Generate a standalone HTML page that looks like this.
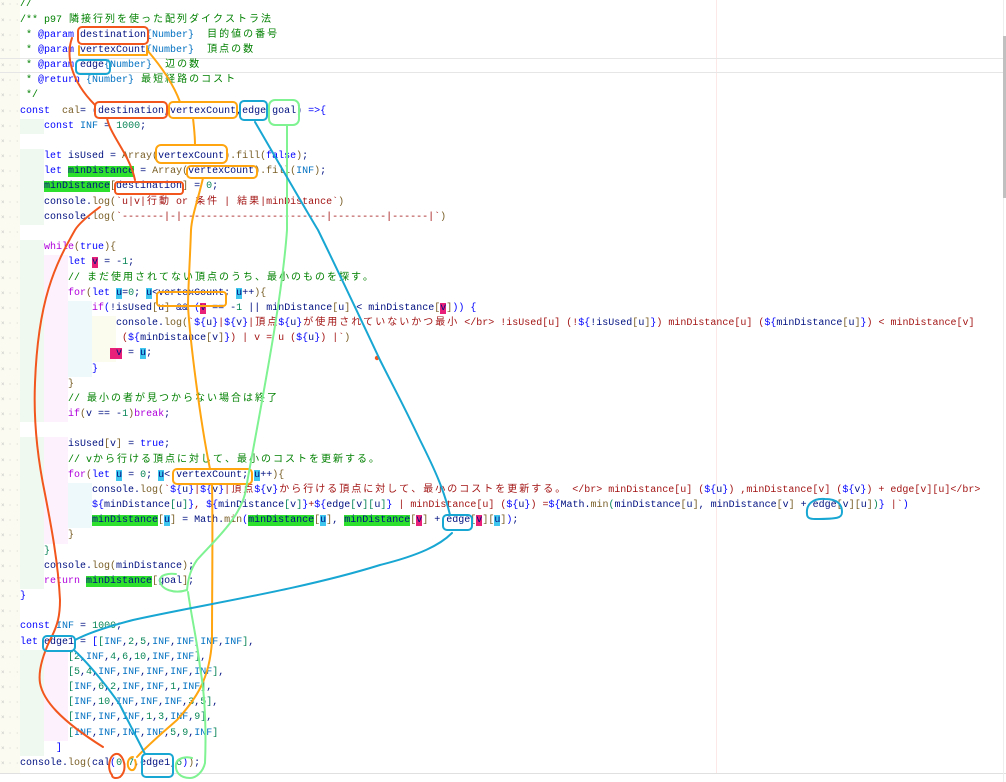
<!DOCTYPE html>
<html><head><meta charset="utf-8">
<style>
html,body{margin:0;padding:0;background:#fff;width:1006px;height:782px;overflow:hidden;position:relative}
#code{position:absolute;left:0;top:-2.6px;width:1003px;font-family:"Liberation Mono","Noto Sans CJK JP",monospace;font-size:10px;color:#001080}
.l{height:15.18px;line-height:15.18px;white-space:pre;padding-left:20px;position:relative;background-repeat:no-repeat;background-position:20px 0;overflow:hidden}
.l::before{content:"× · ·";position:absolute;left:1px;top:0;font-size:6px;color:#c4c4c4;letter-spacing:0}
.w{display:inline-block;width:12px;text-align:center}
.k{color:#0000ff}.p{color:#af00db}.c{color:#008000}.s{color:#a31515}.n{color:#098658}.f{color:#795e26}.i{color:#0070c1}.b{color:#0000ff}
.g{background:#2ee02e}.pk{background:#e8207a}.cy{background:#3fc6ee}
#ann{position:absolute;left:0;top:0}
</style></head><body>
<div style="position:absolute;left:0;top:0;width:20px;height:773px;background:#fbfbf1"></div>
<div style="position:absolute;left:716px;top:0;width:1px;height:773px;background:#fde8e8"></div>
<div style="position:absolute;left:0;top:58px;width:1003px;height:1px;background:#e6e6e6"></div>
<div style="position:absolute;left:0;top:72px;width:1003px;height:1px;background:#e6e6e6"></div>
<div style="position:absolute;left:0;top:773px;width:1006px;height:1px;background:#e0e0e0"></div>
<div style="position:absolute;left:1003px;top:0;width:1px;height:782px;background:#eee"></div>
<div style="position:absolute;left:1003px;top:36px;width:3px;height:162px;background:#c0c0c0"></div>
<div id="code">
<div class="l"><span class="c">//</span></div>
<div class="l"><span class="c">/** p97 隣接行列を使った配列ダイクストラ法</span></div>
<div class="l"><span class="c"> * </span><span class="b">@param</span> destination<span class="i">{Number}</span><span class="c">  目的値の番号</span></div>
<div class="l"><span class="c"> * </span><span class="b">@param</span> vertexCount<span class="i">{Number}</span><span class="c">  頂点の数</span></div>
<div class="l"><span class="c"> * </span><span class="b">@param</span> edge<span class="i">{Number}</span><span class="c">  辺の数</span></div>
<div class="l"><span class="c"> * </span><span class="b">@return</span> <span class="i">{Number}</span><span class="c"> 最短経路のコスト</span></div>
<div class="l"><span class="c"> */</span></div>
<div class="l"><span class="k">const</span>  <span class="f">cal</span>= (destination,vertexCount,edge,goal) <span class="k">=&gt;{</span></div>
<div class="l">    <span class="k">const</span> <span class="i">INF</span> = <span class="n">1000</span>;</div>
<div class="l"></div>
<div class="l">    <span class="k">let</span> isUsed = <span class="f">Array(</span>vertexCount<span class="f">).fill(</span><span class="k">false</span><span class="f">)</span>;</div>
<div class="l">    <span class="k">let</span> <span class="g">minDistance</span> = <span class="f">Array(</span>vertexCount<span class="f">).fill(</span><span class="i">INF</span><span class="f">)</span>;</div>
<div class="l">    <span class="g">minDistance</span><span class="f">[</span>destination<span class="f">]</span> = <span class="n">0</span>;</div>
<div class="l">    console.<span class="f">log(</span><span class="s">`u|v|行動 or 条件 | 結果|minDistance`</span><span class="f">)</span></div>
<div class="l">    console.<span class="f">log(</span><span class="s">`-------|-|------------------------|---------|------|`</span><span class="f">)</span></div>
<div class="l"></div>
<div class="l">    <span class="p">while</span><span class="f">(</span><span class="k">true</span><span class="f">){</span></div>
<div class="l">        <span class="k">let</span> <span class="pk">v</span> = -<span class="n">1</span>;</div>
<div class="l">        <span class="c">// まだ使用されてない頂点のうち、最小のものを探す。</span></div>
<div class="l">        <span class="p">for</span><span class="f">(</span><span class="k">let</span> <span class="cy">u</span>=<span class="n">0</span>; <span class="cy">u</span>&lt;vertexCount; <span class="cy">u</span>++<span class="f">){</span></div>
<div class="l">            <span class="p">if</span><span class="b">(</span>!isUsed<span class="f">[</span>u<span class="f">]</span> &amp;&amp; <span class="b">(</span><span class="pk">v</span> == -<span class="n">1</span> || minDistance<span class="f">[</span>u<span class="f">]</span> &lt; minDistance<span class="f">[</span><span class="pk">v</span><span class="f">]</span><span class="b">))</span> <span class="b">{</span></div>
<div class="l">                console.<span class="f">log(</span><span class="s">`</span><span class="b">${</span>u<span class="b">}</span><span class="s">|</span><span class="b">${</span>v<span class="b">}</span><span class="s">|頂点</span><span class="b">${</span>u<span class="b">}</span><span class="s">が使用されていないかつ最小 &lt;/br&gt; !isUsed[u] (!</span><span class="b">${</span>!isUsed<span class="f">[</span>u<span class="f">]</span><span class="b">}</span><span class="s">) minDistance[u] (</span><span class="b">${</span>minDistance<span class="f">[</span>u<span class="f">]</span><span class="b">}</span><span class="s">) &lt; minDistance[v]</span></div>
<div class="l">                 <span class="s">(</span><span class="b">${</span>minDistance<span class="f">[</span>v<span class="f">]</span><span class="b">}</span><span class="s">) | v = u (</span><span class="b">${</span>u<span class="b">}</span><span class="s">) |`</span><span class="f">)</span></div>
<div class="l">               <span class="pk"> v</span> = <span class="cy">u</span>;</div>
<div class="l">            <span class="b">}</span></div>
<div class="l">        <span class="f">}</span></div>
<div class="l">        <span class="c">// 最小の者が見つからない場合は終了</span></div>
<div class="l">        <span class="p">if</span><span class="f">(</span>v == -<span class="n">1</span><span class="f">)</span><span class="p">break</span>;</div>
<div class="l"></div>
<div class="l">        isUsed<span class="f">[</span>v<span class="f">]</span> = <span class="k">true</span>;</div>
<div class="l">        <span class="c">// vから行ける頂点に対して、最小のコストを更新する。</span></div>
<div class="l">        <span class="p">for</span><span class="f">(</span><span class="k">let</span> <span class="cy">u</span> = <span class="n">0</span>; <span class="cy">u</span>&lt; vertexCount; <span class="cy">u</span>++<span class="f">){</span></div>
<div class="l">            console.<span class="f">log(</span><span class="s">`</span><span class="b">${</span>u<span class="b">}</span><span class="s">|</span><span class="b">${</span>v<span class="b">}</span><span class="s">|頂点</span><span class="b">${</span>v<span class="b">}</span><span class="s">から行ける頂点に対して、最小のコストを更新する。 &lt;/br&gt; minDistance[u] (</span><span class="b">${</span>u<span class="b">}</span><span class="s">) ,minDistance[v] (</span><span class="b">${</span>v<span class="b">}</span><span class="s">) + edge[v][u]&lt;/br&gt;</span></div>
<div class="l">            <span class="b">${</span>minDistance<span class="n">[</span>u<span class="n">]</span><span class="b">}</span><span class="s">, </span><span class="b">${</span>minDistance<span class="n">[</span>v<span class="n">]</span><span class="b">}</span><span class="s">+</span><span class="b">${</span>edge<span class="n">[</span>v<span class="n">][</span>u<span class="n">]</span><span class="b">}</span><span class="s"> | minDistance[u] (</span><span class="b">${</span>u<span class="b">}</span><span class="s">) =</span><span class="b">${</span>Math.<span class="f">min</span><span class="n">(</span>minDistance<span class="f">[</span>u<span class="f">]</span>, minDistance<span class="f">[</span>v<span class="f">]</span> + edge<span class="f">[</span>v<span class="f">][</span>u<span class="f">]</span><span class="n">)</span><span class="b">}</span><span class="s"> |`</span><span class="b">)</span></div>
<div class="l">            <span class="g">minDistance</span><span class="f">[</span><span class="cy">u</span><span class="f">]</span> = Math.<span class="f">min</span><span class="b">(</span><span class="g">minDistance</span><span class="f">[</span><span class="cy">u</span><span class="f">]</span>, <span class="g">minDistance</span><span class="f">[</span><span class="pk">v</span><span class="f">]</span> + edge<span class="f">[</span><span class="pk">v</span><span class="f">][</span><span class="cy">u</span><span class="f">]</span><span class="b">)</span>;</div>
<div class="l">        <span class="f">}</span></div>
<div class="l">    <span class="n">}</span></div>
<div class="l">    console.<span class="f">log(</span>minDistance<span class="f">)</span>;</div>
<div class="l">    <span class="p">return</span> <span class="g">minDistance</span><span class="f">[</span>goal<span class="f">]</span>;</div>
<div class="l"><span class="b">}</span></div>
<div class="l"></div>
<div class="l"><span class="k">const</span> <span class="i">INF</span> = <span class="n">1000</span>;</div>
<div class="l"><span class="k">let</span> edge1 = <span class="b">[</span><span class="n">[</span><span class="i">INF</span>,<span class="n">2</span>,<span class="n">5</span>,<span class="i">INF</span>,<span class="i">INF</span>,<span class="i">INF</span>,<span class="i">INF</span><span class="n">]</span>,</div>
<div class="l">        <span class="n">[2</span>,<span class="i">INF</span>,<span class="n">4</span>,<span class="n">6</span>,<span class="n">10</span>,<span class="i">INF</span>,<span class="i">INF</span><span class="n">]</span>,</div>
<div class="l">        <span class="n">[5</span>,<span class="n">4</span>,<span class="i">INF</span>,<span class="i">INF</span>,<span class="i">INF</span>,<span class="i">INF</span>,<span class="i">INF</span><span class="n">]</span>,</div>
<div class="l">        <span class="n">[</span><span class="i">INF</span>,<span class="n">6</span>,<span class="n">2</span>,<span class="i">INF</span>,<span class="i">INF</span>,<span class="n">1</span>,<span class="i">INF</span><span class="n">]</span>,</div>
<div class="l">        <span class="n">[</span><span class="i">INF</span>,<span class="n">10</span>,<span class="i">INF</span>,<span class="i">INF</span>,<span class="i">INF</span>,<span class="n">3</span>,<span class="n">5]</span>,</div>
<div class="l">        <span class="n">[</span><span class="i">INF</span>,<span class="i">INF</span>,<span class="i">INF</span>,<span class="n">1</span>,<span class="n">3</span>,<span class="i">INF</span>,<span class="n">9]</span>,</div>
<div class="l">        <span class="n">[</span><span class="i">INF</span>,<span class="i">INF</span>,<span class="i">INF</span>,<span class="i">INF</span>,<span class="n">5</span>,<span class="n">9</span>,<span class="i">INF</span><span class="n">]</span></div>
<div class="l">      <span class="b">]</span></div>
<div class="l">console.<span class="f">log(</span>cal<span class="b">(</span><span class="n">0</span>,<span class="n">7</span>,edge1,<span class="n">6</span><span class="b">)</span><span class="f">)</span>;</div>
</div>
<svg id="ann" width="1006" height="782" fill="none" stroke-width="2" stroke-linecap="round" stroke-linejoin="round">
<g stroke="#f2561d">
<rect x="78" y="27" width="70" height="17" rx="4"/>
<rect x="95" y="102" width="72" height="16" rx="4"/>
<rect x="115" y="182" width="68" height="12" rx="3"/>
<path d="M72,38 C66,55 70,80 95,105"/>
<path d="M107,118 C110,135 130,155 135,180"/>
<path d="M100,207 C85,218 78,225 75,230 C55,265 38,300 35,383 C33,430 40,470 45,494 C50,520 58,560 60,600 C60,615 58,625 50,640 C43,655 38,670 40,683 C43,700 60,720 103,747"/>
<path d="M112,775 C106,768 110,752 118,754 C124,756 128,770 120,777 C116,779 112,778 112,775"/>
<circle cx="377" cy="358" r="1.2" fill="#f2561d"/>
</g>
<g stroke="#ffa510">
<path d="M79,46 L79,55 L147,55 L147,46"/>
<rect x="169" y="102" width="68" height="16" rx="4"/>
<rect x="156" y="145" width="71" height="18" rx="5"/>
<rect x="187" y="166" width="70" height="12" rx="4"/>
<rect x="157" y="292" width="69" height="14" rx="3"/>
<rect x="173" y="469" width="79" height="15" rx="4"/>
<path d="M147,50 C160,65 173,83 180,102"/>
<path d="M193,118 C194,128 195,135 195,145"/>
<path d="M203,178 C198,200 192,215 191,230 C190,260 188,290 188,306 C190,340 200,420 210,469"/>
<path d="M212,484 C213,530 212,590 212,640 C210,680 195,700 177,720 C160,735 148,745 137,757"/>
<path d="M133,757 C127,757 126,768 131,770 C135,771 137,765 135,760"/>
</g>
<g stroke="#7ff292">
<rect x="269" y="100" width="30" height="25" rx="6"/>
<path d="M287,125 L287,230 C282,300 262,400 245,494 C238,520 215,540 197,560 C190,570 188,580 187,590"/>
<path d="M187,590 C175,594 160,590 160,580 C160,575 168,573 176,574"/>
<path d="M188,592 C192,620 197,640 200,667 C206,700 206,740 205,763 C203,772 196,778 190,778 C180,778 175,772 176,764 C177,758 186,756 192,758"/>
</g>
<g stroke="#18a6d2">
<rect x="76" y="60" width="34" height="14" rx="4"/>
<rect x="240" y="101" width="27" height="19" rx="4"/>
<rect x="443" y="515" width="29" height="15" rx="4"/>
<rect x="43" y="636" width="32" height="15" rx="4"/>
<rect x="142" y="754" width="31" height="23" rx="4"/>
<path d="M807,514 C806,505 812,498 825,499 C838,499 842,505 842,512 C842,518 838,519 815,519 C810,519 807,518 807,514"/>
<path d="M255,122 C280,165 300,200 318,230 C340,275 364,326 380,360 C395,390 402,402 420,440 C435,470 444,490 450,515"/>
<path d="M452,533 C440,545 420,555 380,565 C300,590 200,605 133,620 C110,626 90,632 75,640"/>
<path d="M75,651 C90,665 110,690 120,705 C130,725 138,740 145,754"/>
</g>
</svg>
<script>
(function(){
var cjk=/[\u3000-\u30ff\u4e00-\u9fff\uff00-\uffef]/;
var code=document.getElementById('code');
var walker=document.createTreeWalker(code,NodeFilter.SHOW_TEXT,null,false);
var nodes=[],n;while(n=walker.nextNode())nodes.push(n);
nodes.forEach(function(t){
 if(!cjk.test(t.nodeValue))return;
 var frag=document.createDocumentFragment(),buf='';
 for(var ch of t.nodeValue){
  if(cjk.test(ch)){if(buf){frag.appendChild(document.createTextNode(buf));buf='';}
   var s=document.createElement('span');s.className='w';s.textContent=ch;frag.appendChild(s);}
  else buf+=ch;}
 if(buf)frag.appendChild(document.createTextNode(buf));
 t.parentNode.replaceChild(frag,t);});
var cols=['#eff9ef','#fcf1fc','#edf9fb','#fbfbee'];
document.querySelectorAll('.l').forEach(function(l){
 var m=l.textContent.match(/^ */)[0].length;if(!l.textContent.trim())return;
 var lv=Math.floor(m/4);if(lv<1)return;var st=[];
 for(var i=0;i<lv;i++){st.push(cols[i%4]+' '+(i*24)+'px',cols[i%4]+' '+((i+1)*24)+'px');}
 l.style.backgroundImage='linear-gradient(to right,'+st.join(',')+')';
 l.style.backgroundSize=(lv*24)+'px 100%';});
})();
</script>
</body></html>
